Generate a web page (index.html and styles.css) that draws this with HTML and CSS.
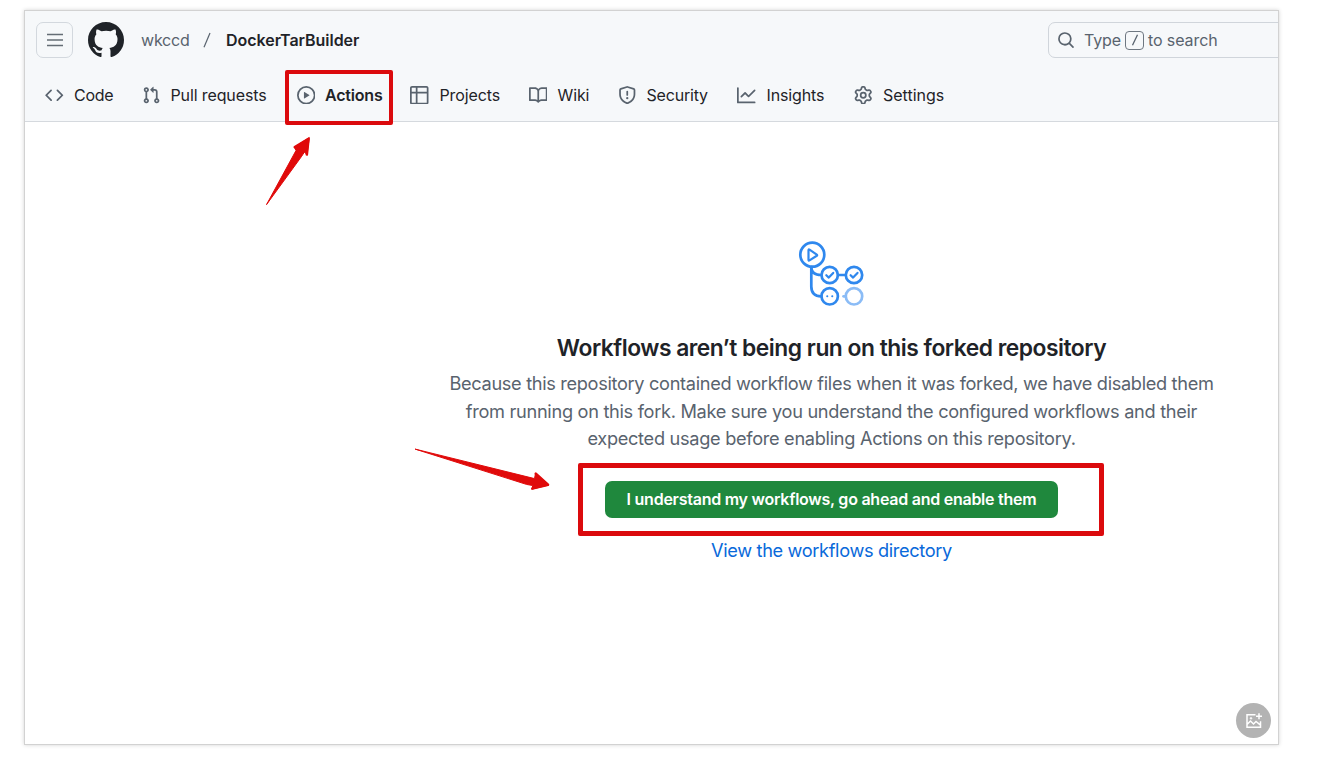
FILE: index.html
```html
<!DOCTYPE html>
<html lang="en">
<head>
<meta charset="utf-8">
<title>Actions · wkccd/DockerTarBuilder</title>
<link rel="stylesheet" href="styles.css">
</head>
<body>
<div class="window">
  <header class="header">
    <div class="topbar">
      <button class="menu" aria-label="Menu"><svg width="18" height="18" viewBox="0 0 18 18" fill="none" stroke="currentColor" stroke-width="1.5"><path d="M1 3.5h16M1 9h16M1 14.5h16"/></svg></button>
      <svg class="logo" viewBox="0 0 16 16"><path fill="currentColor" d="M8 0c4.42 0 8 3.58 8 8a8.013 8.013 0 0 1-5.45 7.59c-.4.08-.55-.17-.55-.38 0-.27.01-1.13.01-2.2 0-.75-.25-1.23-.54-1.48 1.78-.2 3.65-.88 3.65-3.95 0-.88-.31-1.59-.82-2.15.08-.2.36-1.02-.08-2.12 0 0-.67-.22-2.2.82-.64-.18-1.32-.27-2-.27-.68 0-1.36.09-2 .27-1.53-1.03-2.2-.82-2.2-.82-.44 1.1-.16 1.92-.08 2.12-.51.56-.82 1.28-.82 2.15 0 3.06 1.86 3.75 3.64 3.95-.23.2-.44.55-.51 1.07-.46.21-1.61.55-2.33-.66-.15-.24-.6-.83-1.23-.82-.67.01-.27.38.01.53.34.19.73.9.82 1.13.16.45.68 1.31 2.69.94 0 .67.01 1.3.01 1.49 0 .21-.15.45-.55.38A7.995 7.995 0 0 1 0 8c0-4.42 3.58-8 8-8Z"/></svg>
      <span class="owner">wkccd</span>
      <svg class="slash" width="8" height="16" viewBox="0 0 8 16"><path d="M7 1 1 15.200" fill="none" stroke="currentColor" stroke-width="1.200"/></svg>
      <span class="repo">DockerTarBuilder</span>
      <div class="search">
        <svg width="18" height="18" viewBox="0 0 16 16"><path fill="currentColor" d="M10.68 11.74a6 6 0 0 1-7.922-8.982 6 6 0 0 1 8.982 7.922l3.04 3.04a.749.749 0 0 1-.326 1.275.749.749 0 0 1-.734-.215ZM11.5 7a4.499 4.499 0 1 0-8.997 0A4.499 4.499 0 0 0 11.5 7Z"/></svg>
        <span class="type">Type</span><span class="key"><svg width="8" height="12" viewBox="0 0 8 12"><path d="M6.500 .7 1.500 11.300" fill="none" stroke="currentColor" stroke-width="1.300"/></svg></span><span class="tosearch">to search</span>
      </div>
    </div>
    <nav class="nav">
      <a class="tab tab-code"><svg class="icon" viewBox="0 0 16 16"><path d="m11.28 3.22 4.25 4.25a.75.75 0 0 1 0 1.06l-4.25 4.25a.749.749 0 0 1-1.275-.326.749.749 0 0 1 .215-.734L13.94 8l-3.72-3.72a.749.749 0 0 1 .326-1.275.749.749 0 0 1 .734.215Zm-6.56 0a.751.751 0 0 1 1.042.018.751.751 0 0 1 .018 1.042L2.06 8l3.72 3.72a.749.749 0 0 1-.326 1.275.749.749 0 0 1-.734-.215L.47 8.53a.75.75 0 0 1 0-1.06Z"/></svg><span>Code</span></a>
      <a class="tab tab-pulls"><svg class="icon" viewBox="0 0 16 16"><path d="M1.5 3.25a2.25 2.25 0 1 1 3 2.122v5.256a2.251 2.251 0 1 1-1.5 0V5.372A2.25 2.25 0 0 1 1.5 3.25Zm5.677-.177L9.573.677A.25.25 0 0 1 10 .854V2.5h1A2.5 2.5 0 0 1 13.500 5v5.628a2.251 2.251 0 1 1-1.5 0V5a1 1 0 0 0-1-1h-1v1.646a.25.25 0 0 1-.427.177L7.177 3.427a.25.25 0 0 1 0-.354ZM3.75 2.5a.75.75 0 1 0 0 1.5.75.75 0 0 0 0-1.5Zm0 9.500a.75.75 0 1 0 0 1.5.75.75 0 0 0 0-1.5Zm8.250.75a.75.75 0 1 0 1.5 0 .75.75 0 0 0-1.5 0Z"/></svg><span>Pull requests</span></a>
      <a class="tab tab-actions"><svg class="icon" viewBox="0 0 16 16"><path d="M8 0a8 8 0 1 1 0 16A8 8 0 0 1 8 0ZM1.5 8a6.500 6.500 0 1 0 13 0 6.500 6.500 0 0 0-13 0Zm4.879-2.773 4.264 2.559a.25.25 0 0 1 0 .428l-4.264 2.559A.25.25 0 0 1 6 10.559V5.442a.25.25 0 0 1 .379-.215Z"/></svg><span>Actions</span></a>
      <a class="tab tab-projects"><svg class="icon" viewBox="0 0 16 16"><path d="M0 1.750C0 .784.784 0 1.750 0h12.500C15.216 0 16 .784 16 1.750v12.500A1.750 1.750 0 0 1 14.250 16H1.750A1.750 1.750 0 0 1 0 14.250ZM6.500 6.500v8h7.750a.25.25 0 0 0 .25-.25V6.500Zm8-1.500V1.750a.25.25 0 0 0-.25-.25H6.500V5Zm-13 1.500v7.750c0 .138.112.25.25.25H5v-8ZM5 5V1.500H1.750a.25.25 0 0 0-.25.25V5Z"/></svg><span>Projects</span></a>
      <a class="tab tab-wiki"><svg class="icon" viewBox="0 0 16 16"><path d="M0 1.750A.75.75 0 0 1 .75 1h4.253c1.227 0 2.317.59 3 1.501A3.743 3.743 0 0 1 11.006 1h4.245a.75.75 0 0 1 .75.75v10.500a.75.75 0 0 1-.75.75h-4.507a2.250 2.250 0 0 0-1.591.659l-.622.621a.75.75 0 0 1-1.060 0l-.622-.621A2.250 2.250 0 0 0 5.258 13H.75a.75.75 0 0 1-.75-.75Zm7.251 10.324.004-5.073-.002-2.253A2.250 2.250 0 0 0 5.003 2.500H1.500v9h3.757a3.750 3.750 0 0 1 1.994.574ZM8.755 4.750l-.004 7.322a3.752 3.752 0 0 1 1.992-.572H14.500v-9h-3.495a2.250 2.250 0 0 0-2.250 2.250Z"/></svg><span>Wiki</span></a>
      <a class="tab tab-security"><svg class="icon" viewBox="0 0 16 16"><path d="M7.467.133a1.748 1.748 0 0 1 1.066 0l5.250 1.680A1.750 1.750 0 0 1 15 3.480V7c0 1.566-.32 3.182-1.303 4.682-.983 1.498-2.585 2.813-5.032 3.855a1.697 1.697 0 0 1-1.330 0c-2.447-1.042-4.049-2.357-5.032-3.855C1.320 10.182 1 8.566 1 7V3.480a1.755 1.755 0 0 1 1.217-1.667Zm.61 1.429a.25.25 0 0 0-.153 0l-5.250 1.680a.25.25 0 0 0-.174.238V7c0 1.358.275 2.666 1.057 3.860.784 1.194 2.121 2.340 4.366 3.297a.196.196 0 0 0 .154 0c2.245-.956 3.582-2.104 4.366-3.298C13.225 9.666 13.500 8.360 13.500 7V3.480a.251.251 0 0 0-.174-.237l-5.250-1.680ZM8.750 4.750v3a.75.75 0 0 1-1.500 0v-3a.75.75 0 0 1 1.500 0ZM9 10.500a1 1 0 1 1-2 0 1 1 0 0 1 2 0Z"/></svg><span>Security</span></a>
      <a class="tab tab-insights"><svg class="icon" viewBox="0 0 16 16"><path d="M1.500 1.750V13.500h13.750a.75.75 0 0 1 0 1.500H.75a.75.75 0 0 1-.75-.75V1.750a.75.75 0 0 1 1.500 0Zm14.280 2.530-5.250 5.250a.75.75 0 0 1-1.060 0L7 7.060 4.280 9.780a.751.751 0 0 1-1.042-.018.751.751 0 0 1-.018-1.042l3.250-3.250a.75.75 0 0 1 1.060 0L10 7.940l4.720-4.720a.751.751 0 0 1 1.042.018.751.751 0 0 1 .018 1.042Z"/></svg><span>Insights</span></a>
      <a class="tab tab-settings"><svg class="icon" viewBox="0 0 16 16"><path d="M8 0a8.200 8.200 0 0 1 .701.031C9.444.095 9.990.645 10.160 1.290l.288 1.107c.018.066.079.158.212.224.231.114.454.243.668.386.123.082.233.090.299.071l1.103-.303c.644-.176 1.392.021 1.820.630.270.385.506.792.704 1.218.315.675.111 1.422-.364 1.891l-.814.806c-.049.048-.098.147-.088.294.016.257.016.515 0 .772-.010.147.038.246.088.294l.814.806c.475.469.679 1.216.364 1.891a7.977 7.977 0 0 1-.704 1.217c-.428.610-1.176.807-1.820.630l-1.102-.302c-.067-.019-.177-.011-.300.071a5.909 5.909 0 0 1-.668.386c-.133.066-.194.158-.211.224l-.290 1.106c-.168.646-.715 1.196-1.458 1.260a8.006 8.006 0 0 1-1.402 0c-.743-.064-1.289-.614-1.458-1.260l-.289-1.106c-.018-.066-.079-.158-.212-.224a5.738 5.738 0 0 1-.668-.386c-.123-.082-.233-.090-.299-.071l-1.103.303c-.644.176-1.392-.021-1.820-.630a8.120 8.120 0 0 1-.704-1.218c-.315-.675-.111-1.422.363-1.891l.815-.806c.050-.048.098-.147.088-.294a6.214 6.214 0 0 1 0-.772c.010-.147-.038-.246-.088-.294l-.815-.806C.635 6.045.431 5.298.746 4.623a7.920 7.920 0 0 1 .704-1.217c.428-.610 1.176-.807 1.820-.630l1.102.302c.067.019.177.011.300-.071.214-.143.437-.272.668-.386.133-.066.194-.158.211-.224l.290-1.106C6.009.645 6.556.095 7.299.030 7.530.010 7.764 0 8 0Zm-.571 1.525c-.036.003-.108.036-.137.146l-.289 1.105c-.147.561-.549.967-.998 1.189-.173.086-.340.183-.500.290-.417.278-.970.423-1.529.270l-1.103-.303c-.109-.030-.175.016-.195.045-.220.312-.412.644-.573.990-.014.031-.021.110.059.190l.815.806c.411.406.562.957.530 1.456a4.709 4.709 0 0 0 0 .582c.032.499-.119 1.050-.530 1.456l-.815.806c-.081.080-.073.159-.059.190.162.346.353.677.573.989.020.030.085.076.195.046l1.102-.303c.560-.153 1.113-.008 1.530.270.161.107.328.204.501.290.447.222.850.629.997 1.189l.289 1.105c.029.109.101.143.137.146a6.600 6.600 0 0 0 1.142 0c.036-.003.108-.036.137-.146l.289-1.105c.147-.561.549-.967.998-1.189.173-.086.340-.183.500-.290.417-.278.970-.423 1.529-.270l1.103.303c.109.029.175-.016.195-.045.220-.313.411-.644.573-.990.014-.031.021-.110-.059-.190l-.815-.806c-.411-.406-.562-.957-.530-1.456a4.709 4.709 0 0 0 0-.582c-.032-.499.119-1.050.530-1.456l.815-.806c.081-.080.073-.159.059-.190a6.464 6.464 0 0 0-.573-.989c-.020-.030-.085-.076-.195-.046l-1.102.303c-.560.153-1.113.008-1.530-.270a4.440 4.440 0 0 0-.501-.290c-.447-.222-.850-.629-.997-1.189l-.289-1.105c-.029-.110-.101-.143-.137-.146a6.600 6.600 0 0 0-1.142 0ZM11 8a3 3 0 1 1-6 0 3 3 0 0 1 6 0ZM9.500 8a1.500 1.500 0 1 0-3.001.001A1.500 1.500 0 0 0 9.500 8Z"/></svg><span>Settings</span></a>
    </nav>
  </header>
  <main class="blank">
    <svg class="flow" width="68" height="68" viewBox="0 0 68 68" fill="none" stroke="#2f88ee" stroke-width="2.700" stroke-linecap="round" stroke-linejoin="round">
      <circle cx="14.300" cy="13.700" r="12"/>
      <path d="M10.500 9.200v9.600q0 1.200 1 .6l7.300-4.600q.8-.6 0-1.200l-7.300-5q-1-.6-1 .6Z" stroke-width="2.200"/>
      <path d="M13.300 26v19.500q0 9.800 10 9.800M13.300 26q0 8 10 8M40 34h7.500"/>
      <circle cx="31.700" cy="34" r="8.200"/><circle cx="56" cy="34" r="8.200"/><circle cx="31.700" cy="55.300" r="8.200"/>
      <path d="m28.300 34.200 2.500 2.400 4.400-4.700M52.600 34.200l2.500 2.400 4.400-4.700" stroke-width="2.200"/>
      <path d="M29.200 55.300h.1M34.200 55.300h.1" stroke-width="2"/>
      <g stroke="#8bbcf6"><circle cx="56" cy="55.300" r="8.200"/><path d="M45.500 55.300h2"/></g>
    </svg>
    <h1 class="title"><span>Workflows aren’t being run on this forked repository</span></h1>
    <p class="desc"><span class="line line-a">Because this repository contained workflow files when it was forked, we have disabled them</span><span class="line line-b">from running on this fork. Make sure you understand the configured workflows and their</span><span class="line line-c">expected usage before enabling Actions on this repository.</span></p>
    <button class="enable"><span>I understand my workflows, go ahead and enable them</span></button>
    <a class="directory"><span>View the workflows directory</span></a>
  </main>
</div>
<div class="mark mark-tab"></div>
<div class="mark mark-button"></div>
<svg class="arrows" width="1336" height="774" viewBox="0 0 1336 774" fill="#e00a0a" stroke="#e00a0a" stroke-linejoin="round" stroke-linecap="round">
  <path d="M266.700 204.300 296 150.500 294.300 147.300 309.300 137.500 307 154.800 304.500 152 301.500 156.500Z" stroke-width="1"/>
  <path d="M294.800 147 308.500 138.800 306.800 154.500" fill="none" stroke-width="2.600"/>
  <path d="M415.500 449.200 534.500 478.600 535.500 473.500 549 485 532.500 489 532.500 485.500 527 484.500Z" stroke-width="1"/>
  <path d="M535.800 473.700 548 484.700 532.300 488.600" fill="none" stroke-width="2.600"/>
</svg>
<div class="fab"><svg width="18" height="18" viewBox="0 0 18 18" fill="none" stroke="#fff" stroke-width="1.500"><path d="M10.500 2.800H2v12.500h13.500V9.200M2 12.500 5.500 9l3 3 2.500-2.500 4.500 3.700"/><circle cx="6" cy="6.300" r=".9" fill="#fff" stroke-width=".6"/><path d="M14 1.200v6M11 4.200h6"/></svg></div>
</body>
</html>
```
FILE: styles.css
```css
* { box-sizing: border-box; }
body {
  margin: 0;
  height: 774px;
  padding: 11px 0 0 25px;
  overflow: hidden;
  background: #fff;
  color: #1f2328;
  font: 16px/24px Inter, "Liberation Sans", sans-serif;
}
button { border: 0; padding: 0; font: inherit; }
span { white-space: nowrap; }
.window {
  width: 1253px;
  height: 733px;
  overflow: hidden;
  background: #fff;
  box-shadow: 0 0 0 1px #d2d2d2, 0 0 4px 1px #d4d4d4;
}
.header { height: 111px; background: #f6f8fa; border-bottom: 1px solid #d5d9de; }
.topbar { display: flex; align-items: center; height: 58px; padding-left: 11px; }
.menu {
  display: grid;
  place-items: center;
  width: 37px;
  height: 36px;
  border: 1px solid #d3d8de;
  border-radius: 7px;
  background: transparent;
  color: #656d76;
}
.logo { width: 36px; height: 36px; margin-left: 15px; color: #1f2328; }
.owner { width: 48px; margin-left: 17px; color: #59636e; letter-spacing: -.2px; }
.slash { margin: 0 15px 0 14px; color: #59636e; }
.repo { font-weight: 600; letter-spacing: -.04px; }
.search {
  display: flex;
  align-items: center;
  width: 245px;
  height: 36px;
  margin: 0 -15px 0 auto;
  padding-left: 8px;
  border: 1px solid #d0d5db;
  border-radius: 7px;
  color: #59636e;
}
.type { width: 36px; margin-left: 9px; letter-spacing: -.1px; }
.key {
  display: grid;
  place-items: center;
  width: 19px;
  height: 19px;
  margin: 0 4px 0 5px;
  border: 1px solid #6e7781;
  border-radius: 4px;
}
.tosearch { letter-spacing: -.1px; }
.nav { display: flex; height: 52px; padding-left: 20px; letter-spacing: -.12px; }
.tab { display: flex; align-items: center; gap: 10.5px; flex: none; }
.icon { width: 18.500px; height: 18.500px; fill: #59636e; flex: none; }
.tab-code { width: 96.500px; letter-spacing: -.3px; }
.tab-pulls { width: 155px; }
.tab-actions { width: 113.500px; gap: 10px; font-weight: 600; letter-spacing: -.2px; }
.tab-projects { width: 118.500px; gap: 11px; }
.tab-wiki { width: 89px; }
.tab-security { width: 119.500px; letter-spacing: -.2px; }
.tab-insights { width: 116.500px; gap: 11px; }
.tab-settings { gap: 11px; letter-spacing: 0; }
.blank {
  display: flex;
  flex-direction: column;
  align-items: center;
  width: 800px;
  margin-left: 406.500px;
  padding-top: 119px;
}
.title { margin: 23px 0 0; font-size: 22.800px; line-height: 32px; font-weight: 600; letter-spacing: -.48px; }
.desc {
  display: flex;
  flex-direction: column;
  align-items: center;
  margin: 6px 0 0;
  color: #59636e;
  font-size: 18.200px;
  line-height: 27.500px;
}
.line-a { letter-spacing: -.33px; }
.line-b, .line-c { letter-spacing: -.305px; }
.enable {
  display: grid;
  place-items: center;
  width: 453px;
  height: 37px;
  margin-top: 28px;
  border-radius: 7px;
  background: #1f883d;
  color: #fff;
  font-weight: 600;
  letter-spacing: -.25px;
}
.directory { margin-top: 18px; color: #0969da; font-size: 18.200px; line-height: 28px; letter-spacing: -.35px; }
.mark { position: absolute; border: 4.500px solid #db0a0d; border-radius: 2px; }
.mark-tab { left: 285px; top: 70px; width: 108px; height: 55px; }
.mark-button { left: 578px; top: 463px; width: 526px; height: 73px; border-width: 5px; }
.arrows { position: absolute; left: 0; top: 0; }
.fab {
  position: absolute;
  left: 1236px;
  top: 703px;
  display: grid;
  place-items: center;
  width: 35px;
  height: 35px;
  border-radius: 50%;
  background: #b3b3b3;
}
```
